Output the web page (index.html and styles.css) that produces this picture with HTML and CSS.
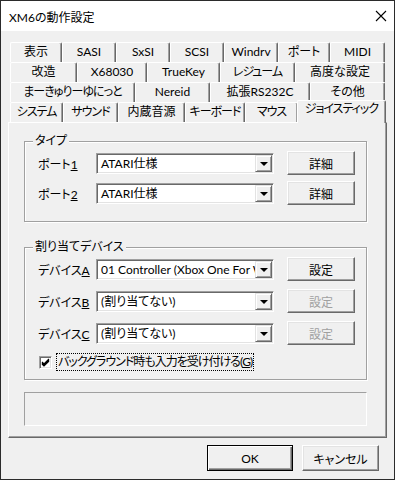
FILE: index.html
```html
<!DOCTYPE html>
<html lang="ja">
<head>
    <meta charset="UTF-8">
    <meta name="viewport" content="width=device-width, initial-scale=1.0">
    <title>XM6の動作設定</title>
    <link rel="stylesheet" href="styles.css">
</head>
<body>

    <div class="window">
        <div class="titlebar">
            <span class="title">XM6の動作設定</span>
            <svg class="close" width="12" height="12" viewBox="0 0 12 12">
                <path d="M1 1 L11 11 M11 1 L1 11" stroke="#000" stroke-width="1.1" fill="none"/>
            </svg>
        </div>

        <div class="client">
            <div class="tabs">
                <div class="tab-row row-1">
                    <div class="tab">表示</div>
                    <div class="tab">SASI</div>
                    <div class="tab">SxSI</div>
                    <div class="tab">SCSI</div>
                    <div class="tab">Windrv</div>
                    <div class="tab">ポート</div>
                    <div class="tab">MIDI</div>
                </div>
                <div class="tab-row row-2">
                    <div class="tab">改造</div>
                    <div class="tab">X68030</div>
                    <div class="tab">TrueKey</div>
                    <div class="tab kana">レジューム</div>
                    <div class="tab">高度な設定</div>
                </div>
                <div class="tab-row row-3">
                    <div class="tab kana">まーきゅりーゆにっと</div>
                    <div class="tab">Nereid</div>
                    <div class="tab">拡張RS232C</div>
                    <div class="tab">その他</div>
                </div>
                <div class="tab-row row-4">
                    <div class="tab kana">システム</div>
                    <div class="tab kana">サウンド</div>
                    <div class="tab">内蔵音源</div>
                    <div class="tab kana">キーボード</div>
                    <div class="tab kana">マウス</div>
                    <div class="tab kana active">ジョイスティック</div>
                </div>
            </div>

            <div class="panel">
                <div class="group group-type">
                    <span class="group-title">タイプ</span>
                    <div class="field-row">
                        <label class="field-label">ポート<u>1</u></label>
                        <div class="combo"><span class="combo-text">ATARI仕様</span><span class="combo-btn"></span></div>
                        <button class="btn">詳細</button>
                    </div>
                    <div class="field-row">
                        <label class="field-label">ポート<u>2</u></label>
                        <div class="combo"><span class="combo-text">ATARI仕様</span><span class="combo-btn"></span></div>
                        <button class="btn">詳細</button>
                    </div>
                </div>

                <div class="group group-device">
                    <span class="group-title">割り当てデバイス</span>
                    <div class="field-row">
                        <label class="field-label">デバイス<u>A</u></label>
                        <div class="combo"><span class="combo-text">01 Controller (Xbox One For W</span><span class="combo-btn"></span></div>
                        <button class="btn">設定</button>
                    </div>
                    <div class="field-row">
                        <label class="field-label">デバイス<u>B</u></label>
                        <div class="combo"><span class="combo-text">(割り当てない)</span><span class="combo-btn"></span></div>
                        <button class="btn" disabled>設定</button>
                    </div>
                    <div class="field-row">
                        <label class="field-label">デバイス<u>C</u></label>
                        <div class="combo"><span class="combo-text">(割り当てない)</span><span class="combo-btn"></span></div>
                        <button class="btn" disabled>設定</button>
                    </div>
                    <div class="check-row">
                        <span class="checkbox">
                            <svg width="9" height="9" viewBox="0 0 9 9">
                                <path d="M1 4 L3 6 L8 1 M1 5 L3 7 L8 2 M1 6 L3 8 L8 3" stroke="#000" stroke-width="1.2" fill="none"/>
                            </svg>
                        </span>
                        <span class="check-label">バックグラウンド時も入力を受け付ける(<u>G</u>)</span>
                    </div>
                </div>

                <div class="status-box"></div>
            </div>

            <div class="dialog-buttons">
                <button class="btn btn-default">OK</button>
                <button class="btn btn-cancel">キャンセル</button>
            </div>
        </div>
    </div>

</body>
</html>
```

FILE: styles.css
```css
* {
    box-sizing: border-box;
}
body {
    margin: 0;
    font-family: Lato, "Noto Sans CJK JP", sans-serif;
    font-size: 12px;
    font-feature-settings: "palt";
    color: #000;
}
.window {
    width: 395px;
    height: 480px;
    border: 1px solid #2b2b2b;
    background-color: #f0f0f0;
    display: flex;
    flex-direction: column;
}
.titlebar {
    height: 30px;
    background-color: #fff;
    display: flex;
    align-items: center;
    justify-content: space-between;
    padding: 0 7px 0 8px;
}
.title {
    font-size: 12px;
}
.client {
    padding: 11px 7px 0 7px;
}

/* tab strip */
.tabs {
    margin: 0 2px;
}
.tab-row {
    display: grid;
    height: 20px;
}
.row-1 {
    grid-template-columns: 52px 54px 54px 54px 54px 52px 1fr;
}
.row-2 {
    grid-template-columns: 67px 70px 73px 75px 1fr;
}
.row-3 {
    grid-template-columns: 125px 75px 100px 1fr;
}
.row-4 {
    grid-template-columns: 53px 55px 67px 60px 53px 1fr;
}
.tab {
    height: 20px;
    border-top: 1px solid #fff;
    border-left: 1px solid #fff;
    border-right: 1px solid #696969;
    box-shadow: inset -1px 0 0 #a0a0a0;
    border-radius: 2px 2px 0 0;
    text-align: center;
    line-height: 18px;
    white-space: nowrap;
    background-color: #f0f0f0;
}
.tab.kana {
    letter-spacing: -1px;
}
.tab.active {
    position: relative;
    z-index: 1;
    height: 23px;
    margin: -2px -1px 0 -1px;
    line-height: 16px;
}

/* page */
.panel {
    height: 316px;
    border: 1px solid;
    border-color: #fff #696969 #696969 #fff;
    box-shadow: inset -1px -1px 0 #a0a0a0;
    padding: 18px 0 0 15px;
}
.group {
    width: 343px;
    border: 1px solid #a0a0a0;
    box-shadow: 1px 1px 0 #fff, inset 1px 1px 0 #fff;
    padding: 0 10px 10px 13px;
}
.group-title {
    display: block;
    width: max-content;
    margin: -9px 0 2px -5px;
    padding: 0 2px;
    line-height: 16px;
    background-color: #f0f0f0;
}
.group-device {
    margin-top: 25px;
    padding-bottom: 8px;
}
.field-row {
    display: flex;
    align-items: center;
    height: 24px;
    margin-bottom: 6px;
}
.group-device .field-row {
    margin-bottom: 8px;
}
.field-label {
    width: 58px;
}
.combo {
    width: 178px;
    height: 21px;
    display: flex;
    background-color: #fff;
    border: 1px solid;
    border-color: #a0a0a0 #fff #fff #a0a0a0;
    box-shadow: inset 1px 1px 0 #696969, inset -1px -1px 0 #e3e3e3;
    padding: 1px;
}
.combo-text {
    flex: 1;
    padding-left: 3px;
    line-height: 17px;
    white-space: nowrap;
    overflow: hidden;
}
.combo-btn {
    width: 17px;
    flex-shrink: 0;
    background-color: #f0f0f0;
    border: 1px solid;
    border-color: #e3e3e3 #696969 #696969 #e3e3e3;
    box-shadow: inset 1px 1px 0 #fff, inset -1px -1px 0 #a0a0a0;
    display: flex;
    align-items: center;
    justify-content: center;
}
.combo-btn::after {
    content: "";
    border-left: 4px solid transparent;
    border-right: 4px solid transparent;
    border-top: 4px solid #000;
    margin-top: 1px;
}
.btn {
    font-family: inherit;
    font-size: 12px;
    font-feature-settings: "palt";
    color: #000;
    width: 68px;
    height: 24px;
    margin-left: 13px;
    padding: 0;
    background-color: #f0f0f0;
    border: 1px solid;
    border-color: #fff #696969 #696969 #fff;
    box-shadow: inset -1px -1px 0 #a0a0a0, inset 1px 1px 0 #e3e3e3;
}
.btn:disabled {
    color: #a0a0a0;
}
.check-row {
    display: flex;
    align-items: center;
    height: 18px;
    margin-top: 7px;
    padding-left: 1px;
}
.checkbox {
    width: 13px;
    height: 13px;
    background-color: #fff;
    border: 1px solid;
    border-color: #a0a0a0 #fff #fff #a0a0a0;
    box-shadow: inset 1px 1px 0 #696969, inset -1px -1px 0 #e3e3e3;
    display: flex;
    align-items: center;
    justify-content: center;
}
.check-label {
    margin-left: 4px;
    padding: 0 1px;
    line-height: 16px;
    letter-spacing: -1px;
    border: 1px dotted #000;
}
.status-box {
    width: 343px;
    height: 34px;
    margin-top: 12px;
    border: 1px solid;
    border-color: #a0a0a0 #fff #fff #a0a0a0;
}

/* OK / cancel */
.dialog-buttons {
    display: flex;
    justify-content: flex-end;
    padding: 7px 8px 0 0;
}
.dialog-buttons .btn {
    height: 26px;
    margin-left: 9px;
}
.btn-default {
    width: 86px;
    border: 1px solid #000;
    box-shadow: inset 1px 1px 0 #fff, inset -1px -1px 0 #696969, inset -2px -2px 0 #a0a0a0;
}
.btn-cancel {
    width: 77px;
}
```
